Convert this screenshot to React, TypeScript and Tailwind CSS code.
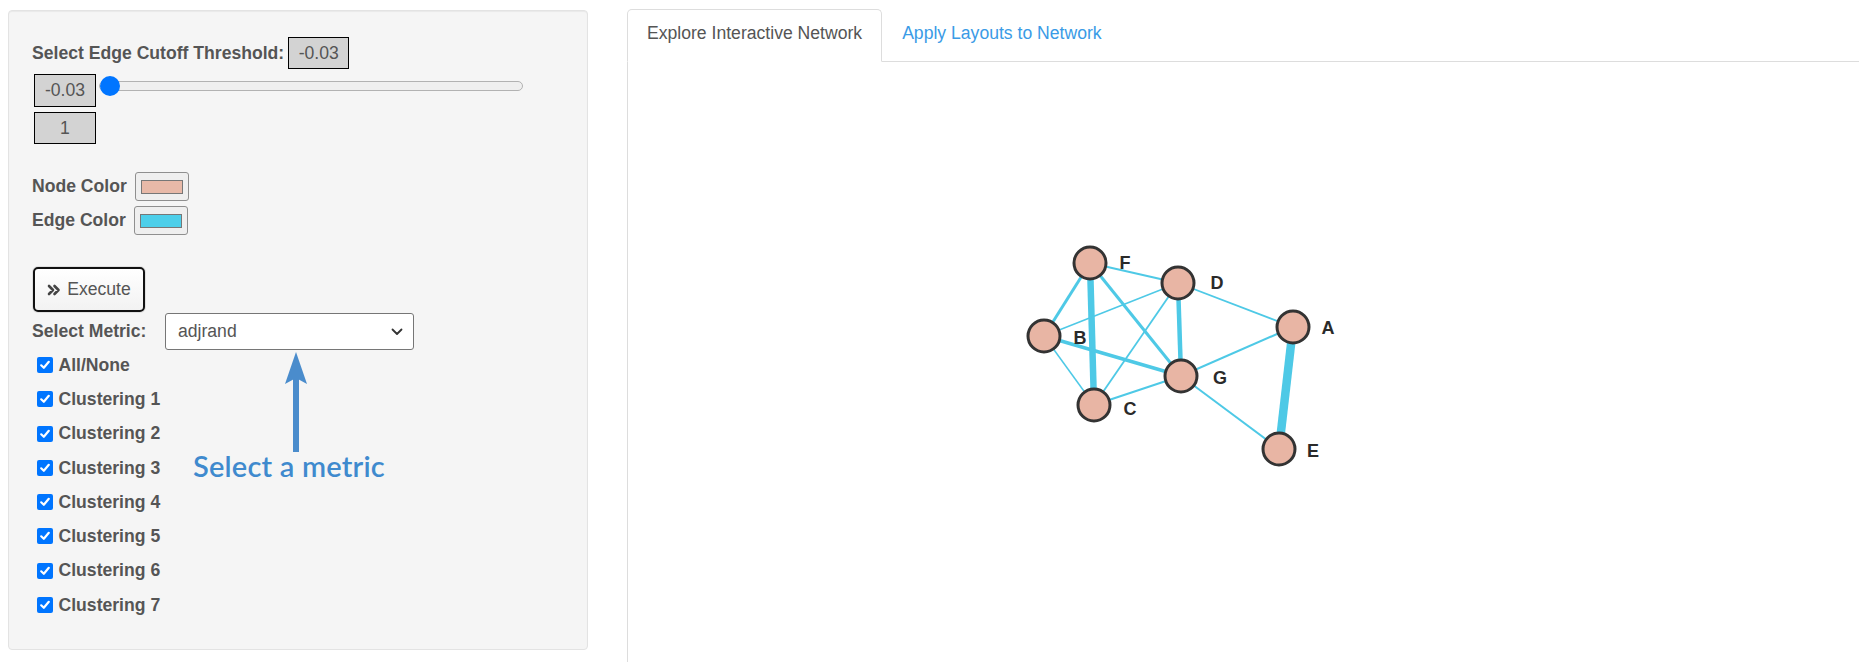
import React from 'react'

const nodes: Record<string, [number, number]> = {
  F: [1090, 263],
  D: [1178, 283],
  B: [1044, 336],
  A: [1293, 327],
  G: [1181, 376],
  C: [1094, 405],
  E: [1279, 449],
}

const labels: Record<string, [number, number]> = {
  F: [1125, 263],
  D: [1217, 283],
  B: [1080, 338],
  A: [1328, 328],
  G: [1220, 378],
  C: [1130, 409],
  E: [1313, 451],
}

const edges: [string, string, number][] = [
  ['F', 'D', 1.8],
  ['F', 'B', 3],
  ['F', 'C', 6.5],
  ['F', 'G', 3],
  ['B', 'D', 1.5],
  ['B', 'G', 3.5],
  ['B', 'C', 1.5],
  ['D', 'C', 1.8],
  ['D', 'G', 4.5],
  ['D', 'A', 1.8],
  ['G', 'A', 2],
  ['G', 'C', 2],
  ['G', 'E', 2],
  ['A', 'E', 8.5],
]

const clusterings = ['All/None', 'Clustering 1', 'Clustering 2', 'Clustering 3', 'Clustering 4', 'Clustering 5', 'Clustering 6', 'Clustering 7']

const ValueBox = ({ children, w }: { children: React.ReactNode; w: string }) => (
  <div className={`${w} h-full flex items-center justify-center bg-[#d3d3d3] border border-black text-[#555]`}>
    {children}
  </div>
)

const Checkbox = () => (
  <div className="w-[16px] h-[16px] rounded-[2px] bg-[#0075ff] flex items-center justify-center">
    <svg width="12" height="12" viewBox="0 0 12 12">
      <path d="M2.2 6.3 L4.8 8.8 L9.8 2.8" fill="none" stroke="white" strokeWidth="2.2" strokeLinecap="round" strokeLinejoin="round" />
    </svg>
  </div>
)

const Swatch = ({ color }: { color: string }) => (
  <div className="w-[54px] h-[29px] bg-[#efefef] border border-[#8f8f8f] rounded-[3px] flex items-center justify-center">
    <div className="w-[42px] h-[14px] border border-[#777]" style={{ backgroundColor: color }} />
  </div>
)

export default function App() {
  return (
    <div className="w-[1859px] h-[662px] overflow-hidden bg-white flex font-['Liberation_Sans',Arial,sans-serif] text-[17.6px] text-[#555]">
      {/* sidebar */}
      <div className="relative ml-[8px] mt-[10px] w-[581px] h-[640px] bg-[#f5f5f5] border border-[#e3e3e3] rounded-[4px] shadow-[inset_0_1px_1px_rgba(0,0,0,0.05)] pl-[23px]">
        <div className="mt-[26px] h-[32px] flex items-center">
          <span className="font-bold">Select Edge Cutoff Threshold:</span>
          <div className="ml-[4px] h-[32px]">
            <ValueBox w="w-[61px]">-0.03</ValueBox>
          </div>
        </div>

        <div className="mt-[5px] h-[33px] flex items-start ml-[2px]">
          <ValueBox w="w-[62px]">-0.03</ValueBox>
          <div className="relative ml-[3px] mt-[7px] w-[424px] h-[10px] bg-[#efefef] border border-[#b2b2b2] rounded-full">
            <div className="absolute left-[0px] top-[-6px] w-[20px] h-[20px] rounded-full bg-[#0075ff]" />
          </div>
        </div>

        <div className="mt-[5px] h-[32px] ml-[2px] flex">
          <ValueBox w="w-[62px]">1</ValueBox>
        </div>

        <div className="mt-[28px] h-[29px] flex items-center">
          <span className="font-bold">Node Color</span>
          <div className="ml-[8px]">
            <Swatch color="#e8b9a8" />
          </div>
        </div>
        <div className="mt-[5px] h-[29px] flex items-center">
          <span className="font-bold">Edge Color</span>
          <div className="ml-[8px]">
            <Swatch color="#4dcfea" />
          </div>
        </div>

        <button className="mt-[32px] ml-[1px] w-[112px] h-[45px] flex items-center justify-center gap-[6px] border-2 border-[#111] rounded-[5px] bg-gradient-to-b from-white to-[#f2f2f2] shadow-[0_0_0_1px_#e0e0e0] text-[#555]">
          <svg width="14" height="14" viewBox="0 0 14 14">
            <path d="M2 3 L6 7 L2 11 M7.5 3 L11.5 7 L7.5 11" fill="none" stroke="#444" strokeWidth="2.6" strokeLinecap="round" strokeLinejoin="round" />
          </svg>
          <span>Execute</span>
        </button>

        <div className="mt-[1px] h-[37px] flex items-center">
          <span className="font-bold w-[133px]">Select Metric:</span>
          <div className="w-[249px] h-[37px] bg-white border border-[#767676] rounded-[3px] flex items-center justify-between pl-[12px] pr-[10px]">
            <span className="text-[#555]">adjrand</span>
            <svg width="12" height="8" viewBox="0 0 12 8">
              <path d="M1.5 1.5 L6 6 L10.5 1.5" fill="none" stroke="#333" strokeWidth="1.8" strokeLinecap="round" strokeLinejoin="round" />
            </svg>
          </div>
        </div>

        <div className="-mt-[2px] ml-[5px] flex flex-col">
          {clusterings.map((c) => (
            <div key={c} className="h-[34.25px] flex items-center gap-[5.5px]">
              <Checkbox />
              <span className="font-bold">{c}</span>
            </div>
          ))}
        </div>

        {/* annotation */}
        <div className="absolute left-[267px] top-[341px] w-[40px] flex flex-col items-center">
          <svg className="w-[22px] h-[32px]" width="22" height="32" viewBox="0 0 22 32">
            <path d="M11 0 L22 32 L11 26 L0 32 Z" fill="#4a8ccc" />
          </svg>
          <div className="-mt-[6px] w-[6px] h-[74px] bg-[#4a8ccc]" />
        </div>
        <div className="absolute left-[184px] top-[440px] font-['Lato',sans-serif] font-semibold text-[29px] text-[#3f8ace] leading-none tracking-[0.2px]">
          Select a metric
        </div>
      </div>

      {/* main */}
      <div className="ml-[39px] mt-[9px] flex-1 flex flex-col">
        <div className="h-[53px] flex items-end border-b border-[#ddd]">
          <div className="-mb-px h-[53px] px-[19px] pb-[4px] flex items-center bg-white border border-[#ddd] border-b-white rounded-t-[5px] text-[#555]">
            Explore Interactive Network
          </div>
          <div className="ml-[1px] h-[52px] px-[19px] pb-[4px] flex items-center text-[#3a9be6]">
            Apply Layouts to Network
          </div>
        </div>
        <div className="flex-1 border-l border-[#ddd]">
          <svg width="1231" height="600" viewBox="628 62 1231 600">
            {edges.map(([a, b, w]) => (
              <line
                key={a + b}
                x1={nodes[a][0]}
                y1={nodes[a][1]}
                x2={nodes[b][0]}
                y2={nodes[b][1]}
                stroke="#4ec9e6"
                strokeWidth={w}
              />
            ))}
            {Object.entries(nodes).map(([k, [x, y]]) => (
              <circle key={k} cx={x} cy={y} r={16} fill="#e8b5a4" stroke="#333" strokeWidth="3" />
            ))}
            {Object.entries(labels).map(([k, [x, y]]) => (
              <text
                key={k}
                x={x}
                y={y}
                textAnchor="middle"
                dominantBaseline="central"
                fontFamily="Liberation Sans, Arial, sans-serif"
                fontSize="18"
                fontWeight="bold"
                fill="#2a2a2a"
              >
                {k}
              </text>
            ))}
          </svg>
        </div>
      </div>
    </div>
  )
}
